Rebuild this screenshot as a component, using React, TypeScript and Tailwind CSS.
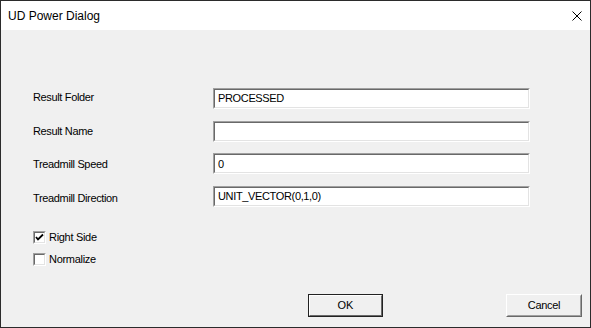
import React from "react";

const font = { fontFamily: '"Liberation Sans", Arial, sans-serif' };

function Field({ value }: { value: string }) {
  return (
    <div className="w-[317px] h-[21px] border border-t-[#a0a0a0] border-l-[#a0a0a0] border-b-white border-r-white">
      <div className="w-full h-full border border-t-[#696969] border-l-[#696969] border-b-[#e3e3e3] border-r-[#e3e3e3] bg-white flex items-center pl-[3px] text-[11px] tracking-[-0.35px] text-black">
        {value}
      </div>
    </div>
  );
}

function Check({ checked, label }: { checked: boolean; label: string }) {
  return (
    <div className="flex items-center h-[13px]">
      <div className="w-[13px] h-[13px] border border-t-[#a0a0a0] border-l-[#a0a0a0] border-b-white border-r-white">
        <div className="w-full h-full border border-t-[#696969] border-l-[#696969] border-b-[#e3e3e3] border-r-[#e3e3e3] bg-white flex items-center justify-center">
          {checked && (
            <svg width="9" height="9" viewBox="0 0 9 9">
              <path d="M1 4 L3 6.5 L8 1.5" stroke="#000" strokeWidth="1.8" fill="none" />
            </svg>
          )}
        </div>
      </div>
      <span className="ml-[3px] text-[11px] tracking-[-0.3px] text-black">{label}</span>
    </div>
  );
}

export default function App() {
  const rows = [
    ["Result Folder", "PROCESSED"],
    ["Result Name", ""],
    ["Treadmill Speed", "0"],
    ["Treadmill Direction", "UNIT_VECTOR(0,1,0)"],
  ];
  return (
    <div style={font} className="w-[591px] h-[328px] border border-[#2b2b2b] flex flex-col bg-[#f0f0f0]">
      <div className="h-[29px] bg-white flex items-center justify-between pl-[7px] pr-[8px]">
        <span className="text-[12px] text-black">UD Power Dialog</span>
        <svg width="10" height="10" viewBox="0 0 10 10">
          <path d="M0.5 0.5 L9.5 9.5 M9.5 0.5 L0.5 9.5" stroke="#000" strokeWidth="1" fill="none" />
        </svg>
      </div>
      <div className="flex-1 flex flex-col pl-[32px] pt-[58px]">
        <div className="flex flex-col gap-[11.7px]">
          {rows.map(([l, v], i) => (
            <div key={l} className="flex items-center h-[21px]">
              <div className={"w-[180px] text-[11px] tracking-[-0.35px] text-black " + (i === 3 ? "mt-[3px]" : i === 0 ? "-mt-[2px]" : "")}>{l}</div>
              <Field value={v} />
            </div>
          ))}
        </div>
        <div className="flex flex-col gap-[9px] mt-[24px]">
          <Check checked label="Right Side" />
          <Check checked={false} label="Normalize" />
        </div>
        <div className="flex mt-[28px] pl-[275px] gap-[123px]">
          <div className="w-[75px] h-[23px] border border-[#222]">
            <div className="w-full h-full border border-t-white border-l-white border-b-[#696969] border-r-[#696969] bg-[#f0f0f0] flex items-center justify-center text-[11px] text-black">
              OK
            </div>
          </div>
          <div className="w-[76px] h-[23px] border border-t-white border-l-white border-b-[#696969] border-r-[#696969]">
            <div className="w-full h-full border border-t-[#f0f0f0] border-l-[#f0f0f0] border-b-[#a0a0a0] border-r-[#a0a0a0] bg-[#f0f0f0] flex items-center justify-center text-[11px] tracking-[-0.3px] text-black">
              Cancel
            </div>
          </div>
        </div>
      </div>
    </div>
  );
}
